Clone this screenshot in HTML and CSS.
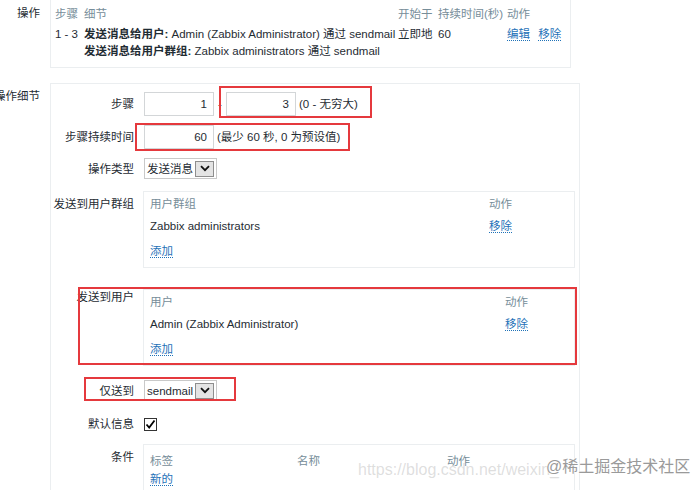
FILE: index.html
```html
<!DOCTYPE html>
<html lang="zh-CN">
<head>
    <meta charset="UTF-8">
    <title>操作 - Zabbix</title>
    <link rel="stylesheet" href="styles.css">
</head>
<body>

    <div class="page">

        <!-- 操作 -->
        <div class="form-row">
            <div class="row-label">操作</div>
            <div class="ops-box">
                <div class="ops-grid">
                    <div class="th">步骤</div>
                    <div class="th">细节</div>
                    <div class="th">开始于</div>
                    <div class="th">持续时间(秒)</div>
                    <div class="th">动作</div>

                    <div>1 - 3</div>
                    <div class="detail">
                        <div><b>发送消息给用户:</b> Admin (Zabbix Administrator) 通过 sendmail</div>
                        <div><b>发送消息给用户群组:</b> Zabbix administrators 通过 sendmail</div>
                    </div>
                    <div>立即地</div>
                    <div>60</div>
                    <div class="links"><a class="link">编辑</a> <a class="link">移除</a></div>
                </div>
            </div>
        </div>

        <!-- 操作细节 -->
        <div class="form-row">
            <div class="row-label details-label">操作细节</div>
            <div class="frame">

                <div class="sub-row">
                    <div class="sub-label">步骤</div>
                    <div class="field">
                        <input class="num" type="text" value="1">
                        <span class="dash">-</span>
                        <input class="num" type="text" value="3">
                        <span class="hint">(0 - 无穷大)</span>
                    </div>
                </div>

                <div class="sub-row">
                    <div class="sub-label">步骤持续时间</div>
                    <div class="field">
                        <input class="num" type="text" value="60">
                        <span class="hint">(最少 60 秒, 0 为预设值)</span>
                    </div>
                </div>

                <div class="sub-row">
                    <div class="sub-label">操作类型</div>
                    <div class="field">
                        <div class="select">
                            <span>发送消息</span>
                            <span class="select-btn">
                                <svg width="10" height="7" viewBox="0 0 10 7"><path d="M1 1.2 L5 5.2 L9 1.2" fill="none" stroke="#111" stroke-width="1.8"/></svg>
                            </span>
                        </div>
                    </div>
                </div>

                <div class="sub-row box-row group-row">
                    <div class="sub-label">发送到用户群组</div>
                    <div class="inner-box">
                        <div class="box-grid group-grid">
                            <div class="th">用户群组</div>
                            <div class="th">动作</div>
                            <div class="td">Zabbix administrators</div>
                            <div class="td"><a class="link">移除</a></div>
                        </div>
                        <div class="box-add"><a class="link">添加</a></div>
                    </div>
                </div>

                <div class="sub-row box-row user-row">
                    <div class="sub-label">发送到用户</div>
                    <div class="inner-box">
                        <div class="box-grid user-grid">
                            <div class="th">用户</div>
                            <div class="th">动作</div>
                            <div class="td">Admin (Zabbix Administrator)</div>
                            <div class="td"><a class="link">移除</a></div>
                        </div>
                        <div class="box-add"><a class="link">添加</a></div>
                    </div>
                </div>

                <div class="sub-row media-row">
                    <div class="sub-label">仅送到</div>
                    <div class="field">
                        <div class="select">
                            <span>sendmail</span>
                            <span class="select-btn">
                                <svg width="10" height="7" viewBox="0 0 10 7"><path d="M1 1.2 L5 5.2 L9 1.2" fill="none" stroke="#111" stroke-width="1.8"/></svg>
                            </span>
                        </div>
                    </div>
                </div>

                <div class="sub-row check-row">
                    <div class="sub-label">默认信息</div>
                    <div class="field">
                        <span class="check">
                            <svg width="11" height="11" viewBox="0 0 11 11"><path d="M1.5 5.5 L4.2 8.5 L9.5 1.5" fill="none" stroke="#000" stroke-width="1.8"/></svg>
                        </span>
                    </div>
                </div>

                <div class="sub-row box-row cond-row">
                    <div class="sub-label">条件</div>
                    <div class="inner-box">
                        <div class="box-grid cond-grid">
                            <div class="th">标签</div>
                            <div class="th">名称</div>
                            <div class="th">动作</div>
                        </div>
                        <div class="box-add new-link"><a class="link">新的</a></div>
                    </div>
                </div>

            </div>
        </div>

    </div>

    <!-- red annotation boxes -->
    <div class="mark mark-steps"></div>
    <div class="mark mark-duration"></div>
    <div class="mark mark-users"></div>
    <div class="mark mark-media"></div>

    <!-- watermark -->
    <div class="watermark">
        <span class="wm-url">https://blog.csdn.net/weixin_</span>
        <span class="wm-name">@稀土掘金技术社区</span>
    </div>

</body>
</html>
```

FILE: styles.css
```css
body {
    margin: 0;
    font-family: "Liberation Sans", "Noto Sans CJK SC", sans-serif;
    font-size: 11.5px;
    line-height: 16px;
    color: #1f2c33;
    background: #fff;
    width: 693px;
    height: 490px;
    overflow: hidden;
    position: relative;
}

.page {
    margin-top: -1px;
}

.form-row {
    display: grid;
    grid-template-columns: 40px auto;
    column-gap: 10px;
    margin-bottom: 15px;
    justify-content: start;
}

.row-label {
    text-align: right;
    white-space: nowrap;
    direction: rtl;
    padding-top: 6px;
}

.details-label {
    padding-top: 5px;
}

/* operations list */
.ops-box {
    width: 515px;
    border: 1px solid #ebeef0;
    padding: 6px 0 7px 4px;
}

.ops-grid {
    display: grid;
    grid-template-columns: 29px 314px 40px 69px auto;
    row-gap: 4px;
    white-space: nowrap;
}

.th {
    color: #768d99;
}

.detail {
    line-height: 17px;
}

.detail b {
    font-weight: bold;
}

.links .link {
    margin-right: 5px;
}

.link {
    color: #1f72b8;
    border-bottom: 1px dotted #1f72b8;
    cursor: pointer;
}

/* details frame */
.frame {
    width: 528px;
    height: 410px;
    border: 1px solid #ebeef0;
    padding-top: 8px;
}

.sub-row {
    display: grid;
    grid-template-columns: 83px auto;
    column-gap: 10px;
    align-items: center;
    margin-bottom: 9px;
}

.sub-label {
    text-align: right;
    white-space: nowrap;
}

.field {
    display: flex;
    align-items: center;
}

.num {
    box-sizing: border-box;
    width: 70px;
    height: 24px;
    border: 1px solid #d3d6d8;
    padding: 0 6px;
    text-align: right;
    font: inherit;
    color: #1f2c33;
}

.dash {
    width: 12px;
    text-align: center;
}

.hint {
    margin-left: 3px;
}

.select {
    box-sizing: border-box;
    display: inline-flex;
    align-items: center;
    height: 21px;
    border: 1px solid #c9c9c9;
    padding: 0 2px 0 2px;
    gap: 2px;
}

.select-btn {
    box-sizing: border-box;
    width: 19px;
    height: 16px;
    border: 1px solid #8e8e8e;
    background: #e4e4e4;
    display: flex;
    align-items: center;
    justify-content: center;
}

.check {
    box-sizing: border-box;
    width: 13px;
    height: 13px;
    border: 1px solid #333;
    display: flex;
    align-items: center;
    justify-content: center;
}

/* boxes with small tables */
.box-row {
    align-items: start;
}

.box-row .sub-label {
    padding-top: 5px;
}

.inner-box {
    margin-left: -1px;
    border: 1px solid #ebeef0;
    padding: 0 0 8px 6px;
    width: 424px;
}

.box-grid {
    display: grid;
}

.box-grid .th {
    padding: 4px 0 2px;
}

.box-grid .td {
    padding: 4px 0;
}

.group-grid {
    grid-template-columns: 339px auto;
}

.user-grid {
    grid-template-columns: 355px auto;
}

.cond-grid {
    grid-template-columns: 147px 150px auto;
}

.box-add {
    padding-top: 5px;
}

.group-row {
    margin-top: 12px;
    margin-bottom: 21px;
}

.user-row {
    margin-bottom: 14px;
}

.user-row .sub-label {
    padding-top: 0;
}

.media-row {
    margin-bottom: 15px;
}

.check-row {
    margin-bottom: 12px;
}

.cond-row .box-grid .th {
    padding: 8px 0 2px;
}

.new-link {
    padding-top: 0;
}

/* annotation marks */
.mark {
    position: absolute;
    border: 2px solid #e5393d;
    box-sizing: border-box;
}

.mark-steps {
    left: 219px;
    top: 86px;
    width: 153px;
    height: 32px;
}

.mark-duration {
    left: 135px;
    top: 123px;
    width: 215px;
    height: 28px;
}

.mark-users {
    left: 78px;
    top: 287px;
    width: 499px;
    height: 78px;
}

.mark-media {
    left: 84px;
    top: 377px;
    width: 152px;
    height: 24px;
}

/* watermark */
.watermark {
    position: absolute;
    left: 358px;
    top: 459px;
    font-size: 16px;
    line-height: 22px;
    white-space: nowrap;
}

.wm-url {
    color: rgba(160, 160, 160, 0.35);
}

.wm-name {
    position: absolute;
    left: 188px;
    top: -3px;
    color: #9a9a9a;
    text-shadow: 0 0 2px #fff, 0 0 2px #fff;
}
```
